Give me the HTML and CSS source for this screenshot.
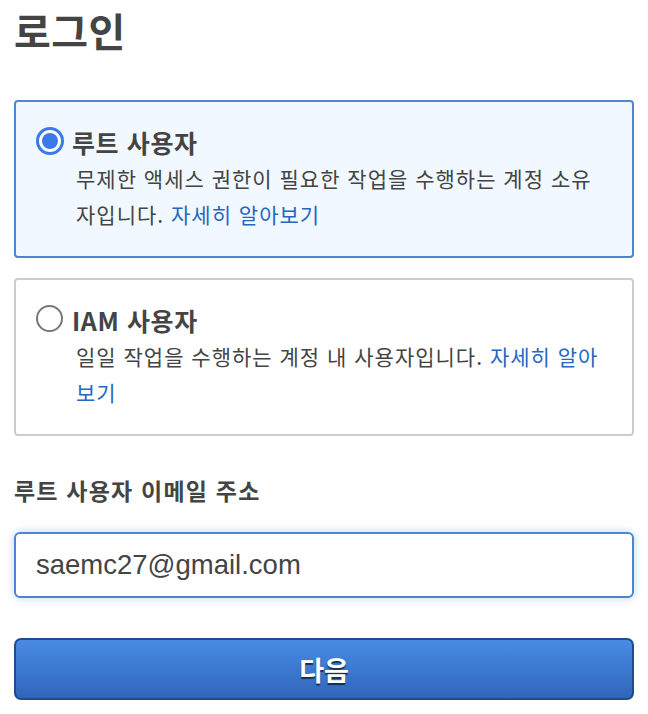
FILE: index.html
```html
<!DOCTYPE html>
<html lang="ko">
<head>
<meta charset="utf-8">
<link rel="stylesheet" href="styles.css">
</head>
<body>
<main class="page">
  <h1 class="title">로그인</h1>
  <div class="options">
    <label class="option selected">
      <span class="radio"><span class="dot"></span></span>
      <span class="opt-body">
        <span class="opt-title">루트 사용자</span>
        <span class="opt-desc">무제한 액세스 권한이 필요한 작업을 수행하는 계정 소유자입니다. <a class="link">자세히 알아보기</a></span>
      </span>
    </label>
    <label class="option">
      <span class="radio"></span>
      <span class="opt-body">
        <span class="opt-title">IAM 사용자</span>
        <span class="opt-desc">일일 작업을 수행하는 계정 내 사용자입니다. <a class="link">자세히 알아보기</a></span>
      </span>
    </label>
  </div>
  <div class="field">
    <div class="field-label">루트 사용자 이메일 주소</div>
    <div class="input">saemc27@gmail.com</div>
  </div>
  <button class="btn">다음</button>
</main>
</body>
</html>
```

FILE: styles.css
```css
* { box-sizing: border-box; }
html, body { margin: 0; padding: 0; background: #fff; }
body {
  font-family: "Noto Sans CJK KR", "Noto Sans", sans-serif;
  color: #444;
}
.page {
  width: 648px;
  padding: 0 14px;
}
.title {
  margin: 0;
  padding-top: 1px;
  font-size: 40px;
  line-height: 58px;
  font-weight: 700;
  color: #444;
  letter-spacing: 0.5px;
}
.options {
  margin-top: 41px;
  display: flex;
  flex-direction: column;
  gap: 20px;
}
.option {
  display: grid;
  grid-template-columns: 28px 1fr;
  column-gap: 8px;
  height: 158px;
  padding: 22px 24px 0 20px;
  border: 2px solid #ccc;
  border-radius: 4px;
  background: #fff;
}
.option.selected {
  border-color: #4a86d4;
  background: #f1f8ff;
}
.radio {
  width: 27px;
  height: 27px;
  margin-top: 3px;
  border: 2px solid #777;
  border-radius: 50%;
  background: #fff;
  display: flex;
  align-items: center;
  justify-content: center;
}
.selected .radio {
  width: 28px;
  height: 28px;
  border: 3px solid #3b7ae8;
}
.dot {
  width: 16px;
  height: 16px;
  border-radius: 50%;
  background: #3a78ec;
}
.opt-body { display: flex; flex-direction: column; }
.opt-title {
  font-size: 25px;
  font-weight: 700;
  line-height: 36px;
  color: #444;
  letter-spacing: 0.6px;
}
.opt-desc {
  display: block;
  padding-left: 4px;
  font-size: 21px;
  line-height: 36px;
  color: #444;
  letter-spacing: 1px;
}
.link { color: #2667c2; text-decoration: none; }
.field { margin-top: 38px; }
.field-label {
  font-size: 23px;
  font-weight: 700;
  line-height: 32px;
  color: #444;
  letter-spacing: 1.2px;
}
.input {
  margin-top: 26px;
  height: 66px;
  border: 2px solid #4a86d4;
  border-radius: 6px;
  box-shadow: 0 0 8px rgba(74, 134, 212, 0.35);
  padding: 0 20px;
  display: flex;
  align-items: center;
  font-family: "Liberation Sans", Arial, sans-serif;
  font-size: 27.5px;
  color: #444;
  background: #fff;
}
.btn {
  margin-top: 40px;
  width: 620px;
  height: 62px;
  border: 2px solid #1f4d8c;
  border-radius: 7px;
  background: linear-gradient(#4a8be4, #2f66bb);
  color: #fff;
  font-family: "Noto Sans CJK KR", sans-serif;
  font-size: 27px;
  font-weight: 700;
  text-shadow: 0 2px 1px rgba(0, 0, 0, 0.6);
  display: block;
}
```
